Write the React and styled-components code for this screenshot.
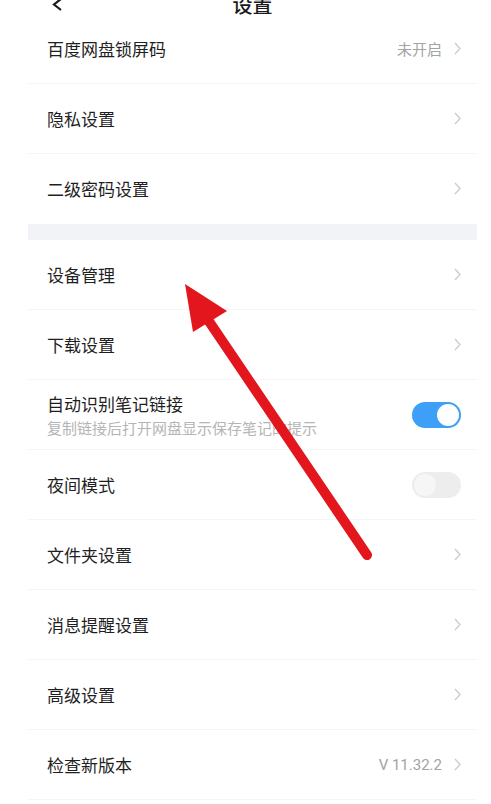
import React from "react"
import styled, { createGlobalStyle } from "styled-components"

const GlobalStyle = createGlobalStyle`
  body {
    margin: 0;
    background: #fff;
    font-family: "Noto Sans CJK SC", "Noto Sans", sans-serif;
    color: #1f1f1f;
  }
`

const Page = styled.div`
  position: relative;
  width: 491px;
  height: 804px;
  overflow: hidden;
  background: #fff;
`

const Header = styled.div`
  height: 19px;
  margin-top: -5px;
  display: flex;
  align-items: center;
  justify-content: center;
  position: relative;
`

const Back = styled.svg`
  position: absolute;
  left: 52px;
  top: 3px;
`

const Title = styled.div`
  font-size: 20px;
  font-weight: 500;
  line-height: 19px;
  color: #1a1a1a;
  margin-left: 14px;
`

const List = styled.div`
  margin: 0 14px 0 28px;
`

const Band = styled.div`
  height: 16px;
  background: #f2f3f7;
`

const Row = styled.div`
  height: 69px;
  display: flex;
  align-items: center;
  padding: 0 16px 0 19px;
  border-bottom: 1px solid ${p => (p.last ? "transparent" : "#f5f5f5")};
`

const Texts = styled.div`
  flex: 1;
  display: flex;
  flex-direction: column;
`

const Label = styled.div`
  font-size: 17px;
  line-height: 24px;
  color: #1f1f1f;
`

const Sub = styled.div`
  font-size: 15px;
  line-height: 20px;
  color: #b5b5b5;
  margin-top: 2px;
`

const Value = styled.span`
  font-size: 15px;
  color: #a3a3a3;
  margin-right: 12px;
  font-family: "Roboto", "Noto Sans CJK SC", sans-serif;
`

const Chevron = () => (
  <svg width="7" height="13" viewBox="0 0 7 13">
    <polyline points="1,1 6,6.5 1,12" fill="none" stroke="#cdcdcd" strokeWidth="1.4" />
  </svg>
)

const Switch = styled.div`
  width: 49px;
  height: 26px;
  border-radius: 13px;
  background: ${p => (p.on ? "#3d9ff7" : "#ededed")};
  position: relative;
  &::after {
    content: "";
    position: absolute;
    top: 2px;
    left: ${p => (p.on ? "25px" : "2px")};
    width: 22px;
    height: 22px;
    border-radius: 50%;
    background: ${p => (p.on ? "#fff" : "#f6f6f6")};
  }
`

const Arrow = styled.svg`
  position: absolute;
  left: 0;
  top: 0;
  pointer-events: none;
`

const Item = ({ label, sub, value, toggle, last }) => (
  <Row last={last}>
    <Texts>
      <Label>{label}</Label>
      {sub && <Sub>{sub}</Sub>}
    </Texts>
    {value && <Value>{value}</Value>}
    {toggle !== undefined ? <Switch on={toggle} /> : <Chevron />}
  </Row>
)

export default function App() {
  return (
    <Page>
      <GlobalStyle />
      <Header>
        <Back width="11" height="14" viewBox="0 0 11 14">
          <polyline points="9,1 2,6.5 9,12" fill="none" stroke="#1a1a1a" strokeWidth="2.2" />
        </Back>
        <Title>设置</Title>
      </Header>
      <List>
        <Item label="百度网盘锁屏码" value="未开启" />
        <Item label="隐私设置" />
        <Item label="二级密码设置" last />
        <Band />
        <Item label="设备管理" />
        <Item label="下载设置" />
        <Item label="自动识别笔记链接" sub="复制链接后打开网盘显示保存笔记的提示" toggle={true} />
        <Item label="夜间模式" toggle={false} />
        <Item label="文件夹设置" />
        <Item label="消息提醒设置" />
        <Item label="高级设置" />
        <Item label="检查新版本" value="V 11.32.2" />
      </List>
      <Arrow width="491" height="804" viewBox="0 0 491 804">
        <line x1="367" y1="555" x2="204" y2="314" stroke="#e3161d" strokeWidth="10" strokeLinecap="round" />
        <polygon points="185,284 193,332 227,311" fill="#e3161d" />
      </Arrow>
    </Page>
  )
}
